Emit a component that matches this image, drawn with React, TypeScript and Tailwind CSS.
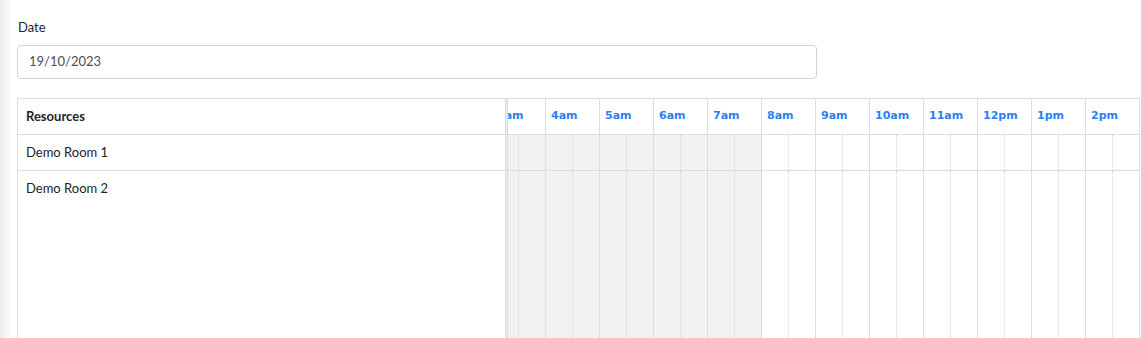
import React from 'react';

const slots = ['3am', '4am', '5am', '6am', '7am', '8am', '9am', '10am', '11am', '12pm', '1pm', '2pm'];
const offHours = ['3am', '4am', '5am', '6am', '7am'];

const SlotCell: React.FC<{ label: string; off: boolean; header?: boolean }> = ({ label, off, header }) => (
  <div
    className={`relative w-[54px] shrink-0 border-l border-[#ddd] ${off && !header ? 'bg-[#f1f1f1]' : ''}`}
  >
    {header ? (
      <span className="absolute left-[5px] top-0 h-full flex items-center font-['DejaVu_Sans',sans-serif] font-bold text-[11px] text-[#2a7ff7]">
        {label}
      </span>
    ) : (
      <div className="absolute left-[26px] top-0 h-full border-l border-dotted border-[#d4d4d4]" />
    )}
  </div>
);

// timeline is scrolled a little to the right, so the first slot is partly hidden
const TimeRow: React.FC<{ header?: boolean; className: string }> = ({ header, className }) => (
  <div className={`flex -ml-[17px] ${className}`}>
    {slots.map((s) => (
      <SlotCell key={s} label={s} off={offHours.includes(s)} header={header} />
    ))}
  </div>
);

export default function App() {
  const resources = ['Demo Room 1', 'Demo Room 2'];

  return (
    <div className="h-[338px] overflow-hidden bg-[linear-gradient(to_right,#ebebeb,#ffffff_13px)] pl-[17px] pt-[19px] font-['Lato',sans-serif] text-[13px] text-[#212529]">
      <label className="block leading-[16px] mb-[10px] ml-px">Date</label>
      <div className="w-[800px] h-[34px] border border-[#ced4da] rounded-[4px] pl-[11px] flex items-center text-[#495057]">
        19/10/2023
      </div>

      <div className="mt-[19px] w-[1123px] border-t border-x border-[#ddd] flex">
        {/* resource column */}
        <div className="w-[487px] shrink-0">
          <div className="h-[36px] border-b border-[#ddd] flex items-center pl-[8px] font-bold">Resources</div>
          <div className="h-[36px] border-b border-[#ddd] flex items-center pl-[8px]">{resources[0]}</div>
          <div className="h-[200px] pl-[8px] pt-[8px]">{resources[1]}</div>
        </div>

        {/* splitter */}
        <div className="w-[3px] shrink-0 border-x border-[#dcdcdc] bg-[#ececec]" />

        {/* timeline */}
        <div className="w-[631px] shrink-0 overflow-hidden">
          <TimeRow header className="h-[36px] border-b border-[#ddd]" />
          <div className="border-b border-[#ddd]">
            <TimeRow className="h-[35px]" />
          </div>
          <TimeRow className="h-[200px]" />
        </div>
      </div>
    </div>
  );
}
